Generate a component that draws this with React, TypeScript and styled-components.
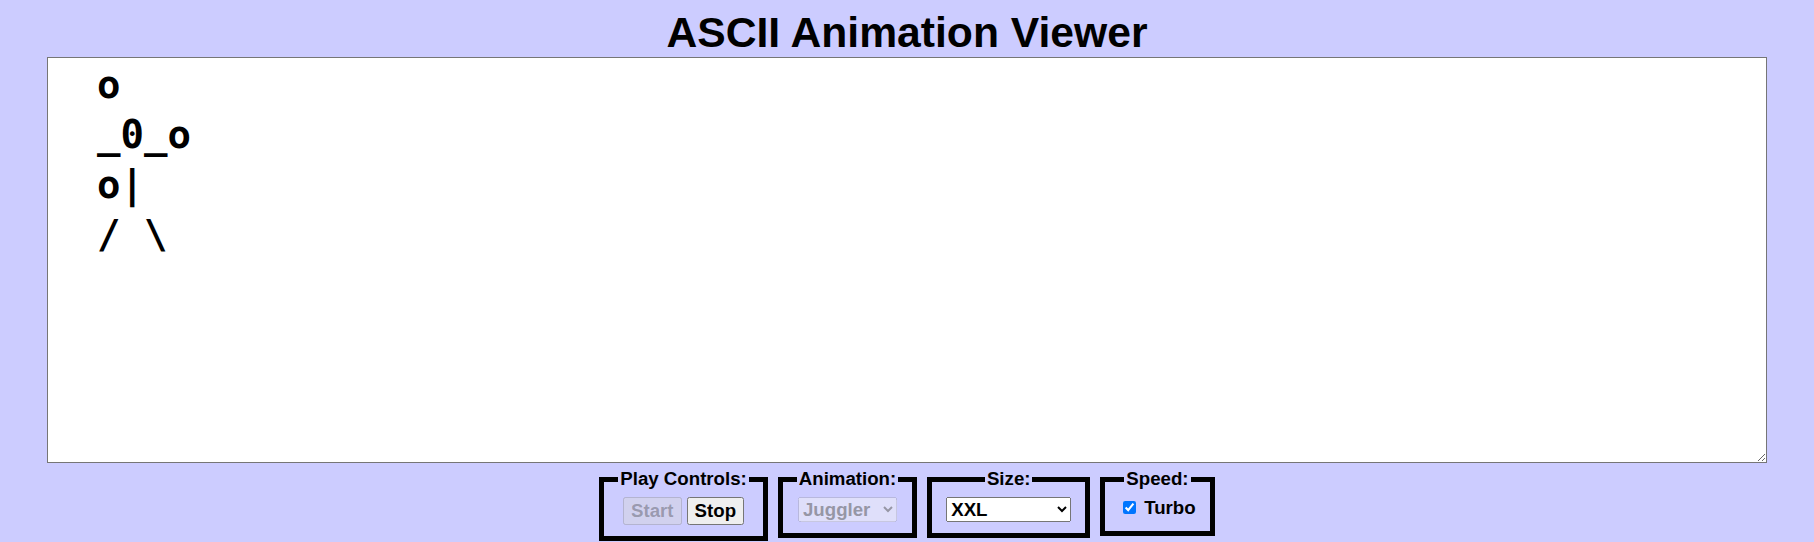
import styled, { createGlobalStyle } from 'styled-components'

const GlobalStyle = createGlobalStyle`
  body {
    margin: 8px;
    background-color: #ccccff;
    font-family: 'Liberation Sans', Arial, sans-serif;
  }
`

const FRAME = ['  o', '  _0_o', '  o|', '  / \\'].join('\n')

export const StyledTitle = styled.h1`
  margin: 0;
  font-size: 32pt;
  font-weight: bold;
  text-align: center;
  color: #000000;
`
export const StyledDisplay = styled.textarea`
  display: block;
  box-sizing: border-box;
  width: 1720px;
  height: 406px;
  margin: 0 auto;
  padding: 2px;
  border: 1px solid #767676;
  background: #ffffff;
  color: #000000;
  font-family: 'DejaVu Sans Mono', 'Liberation Mono', monospace;
  font-size: 39px;
  font-weight: bold;
  line-height: 50px;
`
export const StyledControls = styled.div`
  display: flex;
  flex-direction: row;
  justify-content: center;
  align-items: flex-start;
  gap: 10px;
  margin-top: 5px;
`
export const StyledFieldset = styled.fieldset`
  margin: 0;
  border: 5px solid #000000;
  padding: 0.35em 0.75em 0.625em;
  font-size: 14pt;
  font-weight: bold;
  text-align: center;
`
export const StyledLegend = styled.legend`
  padding: 0 2px;
`
export const StyledButton = styled.button`
  font-family: inherit;
  font-size: inherit;
  font-weight: bold;
  margin: 0;
`
export const StyledButtonRow = styled.div`
  display: flex;
  flex-direction: row;
  justify-content: center;
  gap: 5px;
`
export const StyledSelect = styled.select`
  font-family: inherit;
  font-size: inherit;
  font-weight: bold;
  margin: 0;
`
export const StyledLabel = styled.label`
  display: inline-flex;
  align-items: center;
  gap: 5px;
  font-weight: bold;
`
export const StyledCheckbox = styled.input`
  margin: 3px 3px 3px 4px;
`

const App = () => {
  return (
    <>
      <GlobalStyle />
      <StyledTitle>ASCII Animation Viewer</StyledTitle>
      <StyledDisplay defaultValue={FRAME} spellCheck={false} />
      <StyledControls>
        <StyledFieldset>
          <StyledLegend>Play Controls:</StyledLegend>
          <StyledButtonRow>
            <StyledButton disabled>Start</StyledButton>
            <StyledButton>Stop</StyledButton>
          </StyledButtonRow>
        </StyledFieldset>
        <StyledFieldset>
          <StyledLegend>Animation:</StyledLegend>
          <StyledSelect disabled defaultValue="juggler">
            <option value="blank">Blank</option>
            <option value="exercise">Exercise</option>
            <option value="juggler">Juggler</option>
            <option value="bike">Bike</option>
            <option value="dive">Dive</option>
            <option value="custom">Custom</option>
          </StyledSelect>
        </StyledFieldset>
        <StyledFieldset>
          <StyledLegend>Size:</StyledLegend>
          <StyledSelect defaultValue="xxl">
            <option value="tiny">Tiny</option>
            <option value="small">Small</option>
            <option value="medium">Medium</option>
            <option value="large">Large</option>
            <option value="xl">Extra Large</option>
            <option value="xxl">XXL</option>
          </StyledSelect>
        </StyledFieldset>
        <StyledFieldset>
          <StyledLegend>Speed:</StyledLegend>
          <StyledLabel>
            <StyledCheckbox type="checkbox" defaultChecked />
            Turbo
          </StyledLabel>
        </StyledFieldset>
      </StyledControls>
    </>
  )
}

export default App
